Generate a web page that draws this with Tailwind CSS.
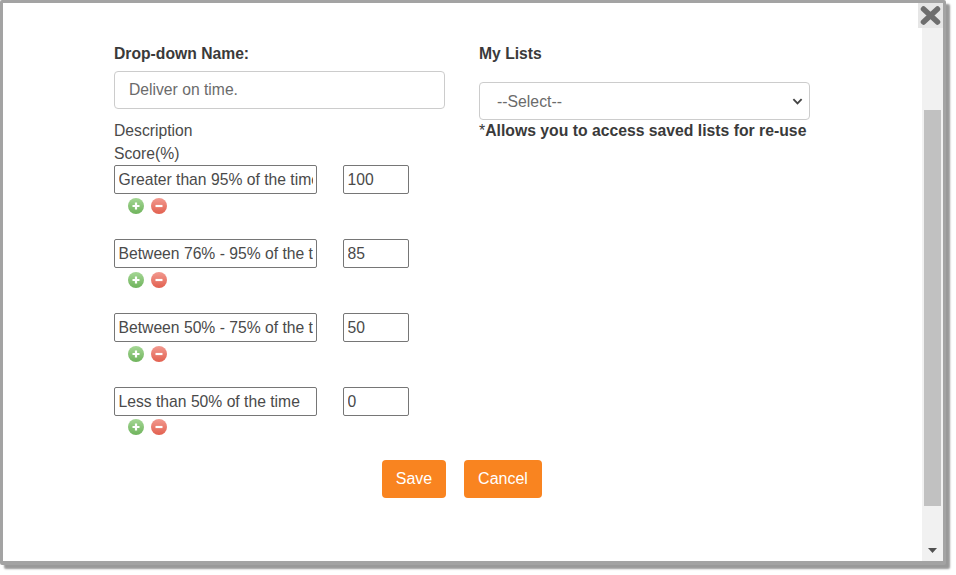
<!DOCTYPE html>
<html lang="en">
<head>
  <meta charset="UTF-8">
  <script src="https://cdn.jsdelivr.net/npm/@tailwindcss/browser@4"></script>
  <title>Drop-down</title>
</head>
<body class="bg-white h-[575px] overflow-hidden font-['Liberation_Sans',Arial,sans-serif] text-[#4a4a4a]">
  <!-- shared gradients for the add / remove buttons -->
  <svg class="absolute w-0 h-0">
    <defs>
      <linearGradient id="addFill" x1="0" y1="0" x2="0" y2="1"><stop offset="0" stop-color="#a5d795"/><stop offset="1" stop-color="#6fb35c"/></linearGradient>
      <linearGradient id="removeFill" x1="0" y1="0" x2="0" y2="1"><stop offset="0" stop-color="#f29a90"/><stop offset="1" stop-color="#e2604f"/></linearGradient>
    </defs>
  </svg>

  <!-- Dialog -->
  <div class="relative w-[946px] h-[565px] flex bg-white border-[3px] border-b-[4px] border-[#a3a3a3] rounded-[2px] shadow-[4px_4px_2px_#999]">
    <!-- Content -->
    <div class="flex-1 min-w-0 pl-[111px] pt-[40px]">
      <div class="flex gap-[34px]">
        <div class="w-[331px]">
          <label class="block text-[15.7px] leading-[22px] font-bold text-[#3a3a3a]">Drop-down Name:</label>
          <input type="text" value="Deliver on time." class="block mt-[6px] w-[331px] h-[38px] px-[14px] text-[15.7px] text-[#6b6b6b] bg-white border border-[#ccc] rounded-[4px]">
          <div class="mt-[10px] text-[15.7px] leading-[23px]">Description</div>
          <div class="text-[15.7px] leading-[23px]">Score(%)</div>

          <div class="h-[74px]">
            <div class="flex gap-[26px]">
              <input type="text" value="Greater than 95% of the time" class="w-[203px] h-[29px] px-[3.5px] text-[15.7px] text-[#4a4a4a] border border-[#767676] rounded-[2px]">
              <input type="text" value="100" class="w-[66px] h-[29px] px-[3.5px] text-[15.7px] text-[#4a4a4a] border border-[#767676] rounded-[2px]">
            </div>
            <div class="flex gap-[7px] mt-[4px] pl-[14px]">
              <svg class="w-[16px] h-[16px]" viewBox="0 0 16 16"><circle cx="8" cy="8" r="8" fill="url(#addFill)"/><path d="M8 4.5v7M4.5 8h7" stroke="#fff" stroke-width="2.2"/></svg>
              <svg class="w-[16px] h-[16px]" viewBox="0 0 16 16"><circle cx="8" cy="8" r="8" fill="url(#removeFill)"/><path d="M4.5 8h7" stroke="#fff" stroke-width="2.2"/></svg>
            </div>
          </div>

          <div class="h-[74px]">
            <div class="flex gap-[26px]">
              <input type="text" value="Between 76% - 95% of the time" class="w-[203px] h-[29px] px-[3.5px] text-[15.7px] text-[#4a4a4a] border border-[#767676] rounded-[2px]">
              <input type="text" value="85" class="w-[66px] h-[29px] px-[3.5px] text-[15.7px] text-[#4a4a4a] border border-[#767676] rounded-[2px]">
            </div>
            <div class="flex gap-[7px] mt-[4px] pl-[14px]">
              <svg class="w-[16px] h-[16px]" viewBox="0 0 16 16"><circle cx="8" cy="8" r="8" fill="url(#addFill)"/><path d="M8 4.5v7M4.5 8h7" stroke="#fff" stroke-width="2.2"/></svg>
              <svg class="w-[16px] h-[16px]" viewBox="0 0 16 16"><circle cx="8" cy="8" r="8" fill="url(#removeFill)"/><path d="M4.5 8h7" stroke="#fff" stroke-width="2.2"/></svg>
            </div>
          </div>

          <div class="h-[74px]">
            <div class="flex gap-[26px]">
              <input type="text" value="Between 50% - 75% of the time" class="w-[203px] h-[29px] px-[3.5px] text-[15.7px] text-[#4a4a4a] border border-[#767676] rounded-[2px]">
              <input type="text" value="50" class="w-[66px] h-[29px] px-[3.5px] text-[15.7px] text-[#4a4a4a] border border-[#767676] rounded-[2px]">
            </div>
            <div class="flex gap-[7px] mt-[4px] pl-[14px]">
              <svg class="w-[16px] h-[16px]" viewBox="0 0 16 16"><circle cx="8" cy="8" r="8" fill="url(#addFill)"/><path d="M8 4.5v7M4.5 8h7" stroke="#fff" stroke-width="2.2"/></svg>
              <svg class="w-[16px] h-[16px]" viewBox="0 0 16 16"><circle cx="8" cy="8" r="8" fill="url(#removeFill)"/><path d="M4.5 8h7" stroke="#fff" stroke-width="2.2"/></svg>
            </div>
          </div>

          <div class="h-[73px]">
            <div class="flex gap-[26px]">
              <input type="text" value="Less than 50% of the time" class="w-[203px] h-[29px] px-[3.5px] text-[15.7px] text-[#4a4a4a] border border-[#767676] rounded-[2px]">
              <input type="text" value="0" class="w-[66px] h-[29px] px-[3.5px] text-[15.7px] text-[#4a4a4a] border border-[#767676] rounded-[2px]">
            </div>
            <div class="flex gap-[7px] mt-[3px] pl-[14px]">
              <svg class="w-[16px] h-[16px]" viewBox="0 0 16 16"><circle cx="8" cy="8" r="8" fill="url(#addFill)"/><path d="M8 4.5v7M4.5 8h7" stroke="#fff" stroke-width="2.2"/></svg>
              <svg class="w-[16px] h-[16px]" viewBox="0 0 16 16"><circle cx="8" cy="8" r="8" fill="url(#removeFill)"/><path d="M4.5 8h7" stroke="#fff" stroke-width="2.2"/></svg>
            </div>
          </div>
        </div>

        <div class="w-[331px]">
          <label class="block text-[15.7px] leading-[22px] font-bold text-[#3a3a3a]">My Lists</label>
          <div class="relative mt-[17px] w-[331px] h-[38px] px-[17px] pt-[1px] flex items-center text-[15.8px] text-[#6b6b6b] bg-white border border-[#ccc] rounded-[4px]">
            <span>--Select--</span>
            <svg class="absolute right-[6px] top-[15px] w-[11px] h-[7px]" viewBox="0 0 12 7"><path d="M1.5 1L6 5.5 10.5 1" fill="none" stroke="#444" stroke-width="2"/></svg>
          </div>
          <p class="mt-[1px] text-[15.75px] leading-[20px] font-bold text-[#3a3a3a] whitespace-nowrap"><span class="font-normal">*</span>Allows you to access saved lists for re-use</p>
        </div>
      </div>

      <div class="flex justify-center gap-[18px] w-[696px]">
        <button class="w-[64px] h-[38px] bg-[#f98420] text-white text-[16px] rounded-[4px]">Save</button>
        <button class="w-[78px] h-[38px] bg-[#f98420] text-white text-[16px] rounded-[4px]">Cancel</button>
      </div>
    </div>

    <!-- Scrollbar -->
    <div class="w-[21px] shrink-0 flex flex-col items-center bg-[#f1f1f1]">
      <div class="h-[107px] shrink-0"></div>
      <div class="w-[17px] h-[396px] bg-[#c1c1c1]"></div>
      <div class="flex-1 flex items-end pb-[8px]">
        <svg class="w-[9px] h-[5px]" viewBox="0 0 9 5"><path d="M0 0h9L4.5 5z" fill="#505050"/></svg>
      </div>
    </div>

    <!-- Close -->
    <div class="absolute top-0 right-0 w-[25px] h-[25px] flex items-center justify-center bg-[#e6e6e6]">
      <svg class="w-[21px] h-[19px]" viewBox="0 0 21 19"><path d="M3.5 3l14 13M17.5 3l-14 13" stroke="#6e6e6e" stroke-width="5.5" stroke-linecap="round"/></svg>
    </div>
  </div>
</body>
</html>
